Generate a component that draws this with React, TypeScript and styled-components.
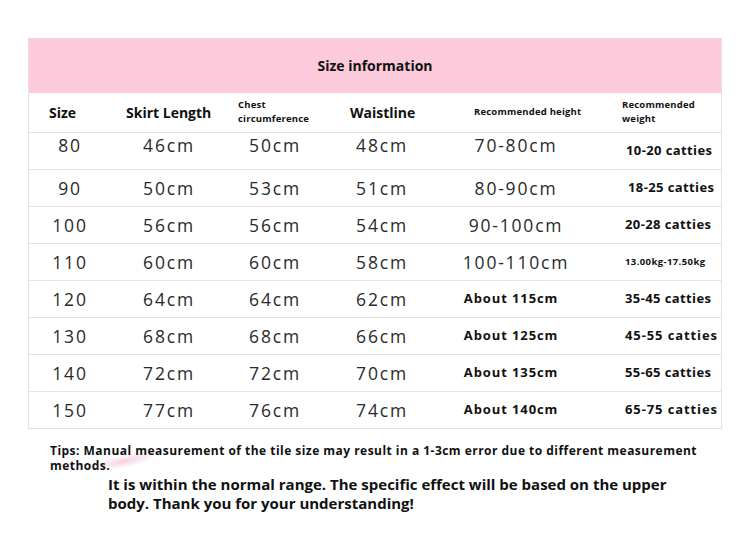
import React from "react";
import styled, { createGlobalStyle } from "styled-components";

const Global = createGlobalStyle`
  html, body { margin: 0; padding: 0; background: #ffffff; }
  body { font-family: "Open Sans", "Noto Sans", Arial, sans-serif; color: #111; }
`;

const Page = styled.div`
  width: 750px;
  height: 536px;
  padding: 38px 0 0 28px;
  box-sizing: border-box;
  overflow: hidden;
`;

const Table = styled.div`
  width: 694px;
  border: 1px solid #f1dae2;
  border-top: none;
  box-sizing: border-box;
`;

const TitleBar = styled.div`
  height: 55px;
  background: #fdcadb;
  display: flex;
  align-items: center;
  justify-content: center;
  font-weight: 700;
  font-size: 14px;
  color: #111;
`;

const COLS = "82px 116px 96px 118px 150px 130px";

const HeaderRow = styled.div`
  display: grid;
  grid-template-columns: ${COLS};
  height: 39px;
`;

const Row = styled.div`
  display: grid;
  grid-template-columns: ${COLS};
  height: 37px;
  border-top: 1px solid #f0dee5;
  box-sizing: border-box;
`;

const HeadCell = styled.div<{ $pad: number; $small?: boolean }>`
  display: flex;
  align-items: center;
  padding-left: ${(p) => p.$pad}px;
  font-weight: 700;
  font-size: ${(p) => (p.$small ? "9.5px" : "14px")};
  line-height: ${(p) => (p.$small ? "14px" : "18px")};
  letter-spacing: ${(p) => (p.$small ? "0.2px" : "0")};
  color: #111;
  padding-bottom: ${(p) => (p.$small ? "2px" : "0")};
`;

const Value = styled.div<{ $lift?: boolean }>`
  display: flex;
  align-items: center;
  justify-content: center;
  font-size: 17.5px;
  letter-spacing: 1.8px;
  color: #2a2a2a;
  font-weight: 400;
  padding-bottom: ${(p) => (p.$lift ? "12px" : "0")};
`;

const BoldValue = styled.div<{ $small?: boolean; $pad?: number; $wide?: boolean; $shift?: number }>`
  display: flex;
  align-items: center;
  justify-content: ${(p) => (p.$pad !== undefined ? "flex-start" : "center")};
  padding-left: ${(p) => p.$pad ?? 0}px;
  padding-right: ${(p) => p.$shift ?? 0}px;
  padding-bottom: 2px;
  font-weight: 700;
  font-size: ${(p) => (p.$small ? "9.5px" : "13px")};
  letter-spacing: ${(p) => (p.$wide ? "0.9px" : "0.4px")};
  color: #111;
`;

const Notes = styled.div`
  position: relative;
  margin-top: 14px;
  margin-left: 22px;
`;

const Smudge = styled.div`
  position: absolute;
  left: 50px;
  top: 10px;
  width: 60px;
  height: 14px;
  background: radial-gradient(ellipse at 40% 50%, rgba(244, 170, 200, 0.55), rgba(255, 220, 235, 0) 70%);
  transform: rotate(-12deg);
  pointer-events: none;
`;

const Tips = styled.p`
  position: relative;
  margin: 0;
  width: 662px;
  font-weight: 700;
  font-size: 12px;
  line-height: 15px;
  letter-spacing: 0.47px;
  color: #111;
`;

const Thanks = styled.p`
  margin: 2px 0 0 58px;
  width: 580px;
  font-weight: 700;
  font-size: 15px;
  line-height: 19px;
  letter-spacing: 0;
  color: #111;
`;

type Height = { text: string; bold?: boolean };
type Weight = { text: string; small?: boolean; wide?: boolean; pad: number };

const rows: {
  size: string;
  skirt: string;
  chest: string;
  waist: string;
  height: Height;
  weight: Weight;
  lift?: boolean;
}[] = [
  { size: "80", skirt: "46cm", chest: "50cm", waist: "48cm", height: { text: "70-80cm" }, weight: { text: "10-20 catties", pad: 35 }, lift: true },
  { size: "90", skirt: "50cm", chest: "53cm", waist: "51cm", height: { text: "80-90cm" }, weight: { text: "18-25 catties", pad: 37 } },
  { size: "100", skirt: "56cm", chest: "56cm", waist: "54cm", height: { text: "90-100cm" }, weight: { text: "20-28 catties", pad: 34 } },
  { size: "110", skirt: "60cm", chest: "60cm", waist: "58cm", height: { text: "100-110cm" }, weight: { text: "13.00kg-17.50kg", small: true, pad: 34 } },
  { size: "120", skirt: "64cm", chest: "64cm", waist: "62cm", height: { text: "About 115cm", bold: true }, weight: { text: "35-45 catties", pad: 34 } },
  { size: "130", skirt: "68cm", chest: "68cm", waist: "66cm", height: { text: "About 125cm", bold: true }, weight: { text: "45-55 catties", wide: true, pad: 34 } },
  { size: "140", skirt: "72cm", chest: "72cm", waist: "70cm", height: { text: "About 135cm", bold: true }, weight: { text: "55-65 catties", pad: 34 } },
  { size: "150", skirt: "77cm", chest: "76cm", waist: "74cm", height: { text: "About 140cm", bold: true }, weight: { text: "65-75 catties", wide: true, pad: 34 } },
];

export default function App() {
  return (
    <>
      <Global />
      <Page>
        <Table>
          <TitleBar>Size information</TitleBar>
          <HeaderRow>
            <HeadCell $pad={20}>Size</HeadCell>
            <HeadCell $pad={15}>Skirt Length</HeadCell>
            <HeadCell $pad={11} $small>
              Chest
              <br />
              circumference
            </HeadCell>
            <HeadCell $pad={27}>Waistline</HeadCell>
            <HeadCell $pad={33} $small>
              Recommended height
            </HeadCell>
            <HeadCell $pad={31} $small>
              Recommended
              <br />
              weight
            </HeadCell>
          </HeaderRow>
          {rows.map((r) => (
            <Row key={r.size}>
              <Value $lift={r.lift}>{r.size}</Value>
              <Value $lift={r.lift}>{r.skirt}</Value>
              <Value $lift={r.lift}>{r.chest}</Value>
              <Value $lift={r.lift}>{r.waist}</Value>
              {r.height.bold ? (
                <BoldValue $wide $shift={10}>
                  {r.height.text}
                </BoldValue>
              ) : (
                <Value $lift={r.lift}>{r.height.text}</Value>
              )}
              <BoldValue $small={r.weight.small} $wide={r.weight.wide} $pad={r.weight.pad}>
                {r.weight.text}
              </BoldValue>
            </Row>
          ))}
        </Table>
        <Notes>
          <Smudge />
          <Tips>
            Tips: Manual measurement of the tile size may result in a 1-3cm error due to different measurement methods.
          </Tips>
          <Thanks>
            It is within the normal range. The specific effect will be based on the upper body. Thank you for your
            understanding!
          </Thanks>
        </Notes>
      </Page>
    </>
  );
}
